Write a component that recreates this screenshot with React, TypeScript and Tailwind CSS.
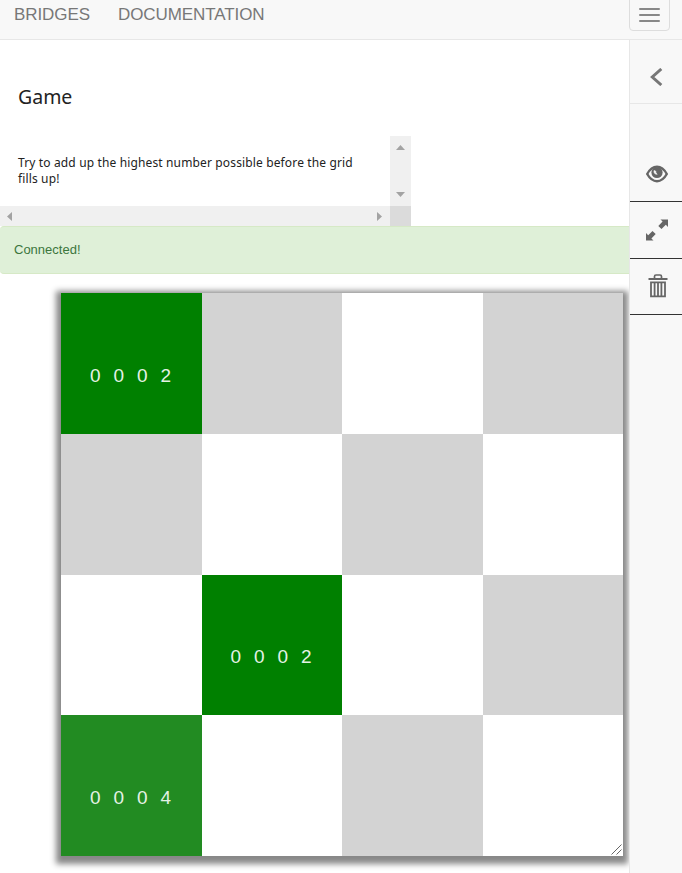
const G = 'bg-[#008000]';
const L = 'bg-[#d3d3d3]';
const W = 'bg-white';

const cells: { bg: string; label?: string }[] = [
  { bg: G, label: '0002' }, { bg: L }, { bg: W }, { bg: L },
  { bg: L }, { bg: W }, { bg: L }, { bg: W },
  { bg: W }, { bg: G, label: '0002' }, { bg: W }, { bg: L },
  { bg: 'bg-[#228b22]', label: '0004' }, { bg: W }, { bg: L }, { bg: W },
];

function Navbar() {
  return (
    <header className="flex h-10 shrink-0 items-start justify-between border-b border-[#e7e7e7] bg-[#f8f8f8] pr-3">
      <nav className="flex gap-7 pl-3.5 pt-[5px] text-[17px] leading-5 tracking-[-0.08px] text-[#777]">
        <a>BRIDGES</a>
        <a>DOCUMENTATION</a>
      </nav>
      <button className="-mt-1 flex h-[35px] w-[41px] flex-col items-center justify-center gap-1 rounded border border-[#ddd] pt-[3px]">
        <span className="h-0.5 w-[21px] rounded-[1px] bg-[#888]" />
        <span className="h-0.5 w-[21px] rounded-[1px] bg-[#888]" />
        <span className="h-0.5 w-[21px] rounded-[1px] bg-[#888]" />
      </button>
    </header>
  );
}

function Arrow({ points, w, h }: { points: string; w: number; h: number }) {
  return (
    <svg width={w} height={h} viewBox={`0 0 ${w} ${h}`} fill="#a3a3a3">
      <polygon points={points} />
    </svg>
  );
}

function Description() {
  return (
    <section className="grid h-[90px] w-[411px] grid-cols-[390px_21px] grid-rows-[70px_20px]">
      <p className="pl-[18px] pt-[19px] font-['Noto_Sans','Open_Sans',sans-serif] text-[12px] leading-4 tracking-[0.14px] text-[#222]">
        Try to add up the highest number possible before the grid
        <br />
        fills up!
      </p>
      <div className="flex flex-col items-center justify-between bg-[#f0f0f0] pb-[9px] pt-[9px]">
        <Arrow w={9} h={5} points="0,5 4.5,0 9,5" />
        <Arrow w={9} h={5} points="0,0 4.5,5 9,0" />
      </div>
      <div className="flex items-center justify-between bg-[#f0f0f0] pl-[7px] pr-2 pt-px">
        <Arrow w={5} h={9} points="5,0 0,4.5 5,9" />
        <Arrow w={5} h={9} points="0,0 5,4.5 0,9" />
      </div>
      <div className="bg-[#dbdbdb]" />
    </section>
  );
}

function Board() {
  return (
    <div className="relative ml-[61px] mt-[19px] grid h-[563px] w-[562px] grid-cols-4 grid-rows-4 shadow-[0px_3px_6px_5px_#888]">
      {cells.map((c, i) => (
        <div key={i} className={`${c.bg} pl-[29px] pt-[71.5px]`}>
          {c.label && (
            <span className="block whitespace-nowrap text-[19px] leading-[22px] tracking-[12.9px] text-[#e5f2e5]">{c.label}</span>
          )}
        </div>
      ))}
      <svg className="absolute bottom-px right-px" width="11" height="11" viewBox="0 0 11 11" stroke="#666" strokeWidth="1">
        <path d="M.5 10.5l10-10M5.5 10.5l5-5" />
      </svg>
    </div>
  );
}

function Sidebar() {
  return (
    <aside className="relative flex w-[53px] shrink-0 flex-col border-l border-[#e7e7e7] bg-[#f8f8f8] text-[#666]">
      <button className="flex h-16 items-center justify-center border-b border-[#e7e7e7] pt-[10px]">
        <svg width="14" height="18" viewBox="0 0 14 18" fill="none" stroke="#777" strokeWidth="3">
          <path d="M12.3 1L3.3 9l9 8" />
        </svg>
      </button>
      <button className="flex h-[98px] items-end justify-center border-b border-[#333] pb-[18px] pl-[2px]">
        <svg width="22" height="18" viewBox="0 0 22 18">
          <path d="M1.200 9Q5.200 1.600 11 1.600T20.800 9Q16.800 16.200 11 16.200T1.200 9Z" fill="none" stroke="currentColor" strokeWidth="2.400" />
          <circle cx="11" cy="7.500" r="5.600" fill="currentColor" />
          <path d="M8 5.500Q7.500 9.300 11.200 9.300Q9.500 8 9.800 6.200Z" fill="#f8f8f8" stroke="#f8f8f8" strokeWidth="0.600" />
        </svg>
      </button>
      <button className="flex h-[57px] items-center justify-center border-b border-[#333] pb-px pl-[2px]">
        <svg width="22" height="22" viewBox="0 0 22 22" fill="currentColor">
          <path d="M14.500 0.500h7.500v7.500l-2.200-2.200-4.300 4.300-3.200-3.200 4.300-4.300zM0 21.500v-7.500l2.200 2.200 4.300-4.300 3.200 3.200-4.300 4.300L7.500 21.500z" />
        </svg>
      </button>
      <button className="flex h-14 items-center justify-center border-b border-[#333] pb-0.5 pl-1">
        <svg width="20" height="24" viewBox="0 0 20 24" fill="none" stroke="currentColor">
          <path d="M6.500 4V2.500Q6.500 1 8 1h4q1.500 0 1.500 1.500V4" strokeWidth="1.700" />
          <path d="M.5 5h19" strokeWidth="2" />
          <path d="M2.100 8.300h15.800M3 8v14.300h14V8M6.600 8v14M10 8v14M13.400 8v14" strokeWidth="1.800" />
        </svg>
      </button>
    </aside>
  );
}

export default function App() {
  return (
    <div className="flex h-[873px] w-[682px] flex-col overflow-hidden bg-white font-['Liberation_Sans',sans-serif]">
      <Navbar />
      <div className="flex min-h-0 flex-1">
        <main className="w-[629px] shrink-0">
          <h1 className="h-24 pl-[18px] pt-[43px] font-['Noto_Sans','Open_Sans',sans-serif] text-[19.500px] leading-7 text-[#222]">Game</h1>
          <Description />
          <div className="flex h-12 items-center rounded-l border-y border-[#d6e9c6] bg-[#dff0d8] pl-3.5 text-[13px] text-[#3c763d]">
            Connected!
          </div>
          <Board />
        </main>
        <Sidebar />
      </div>
    </div>
  );
}
